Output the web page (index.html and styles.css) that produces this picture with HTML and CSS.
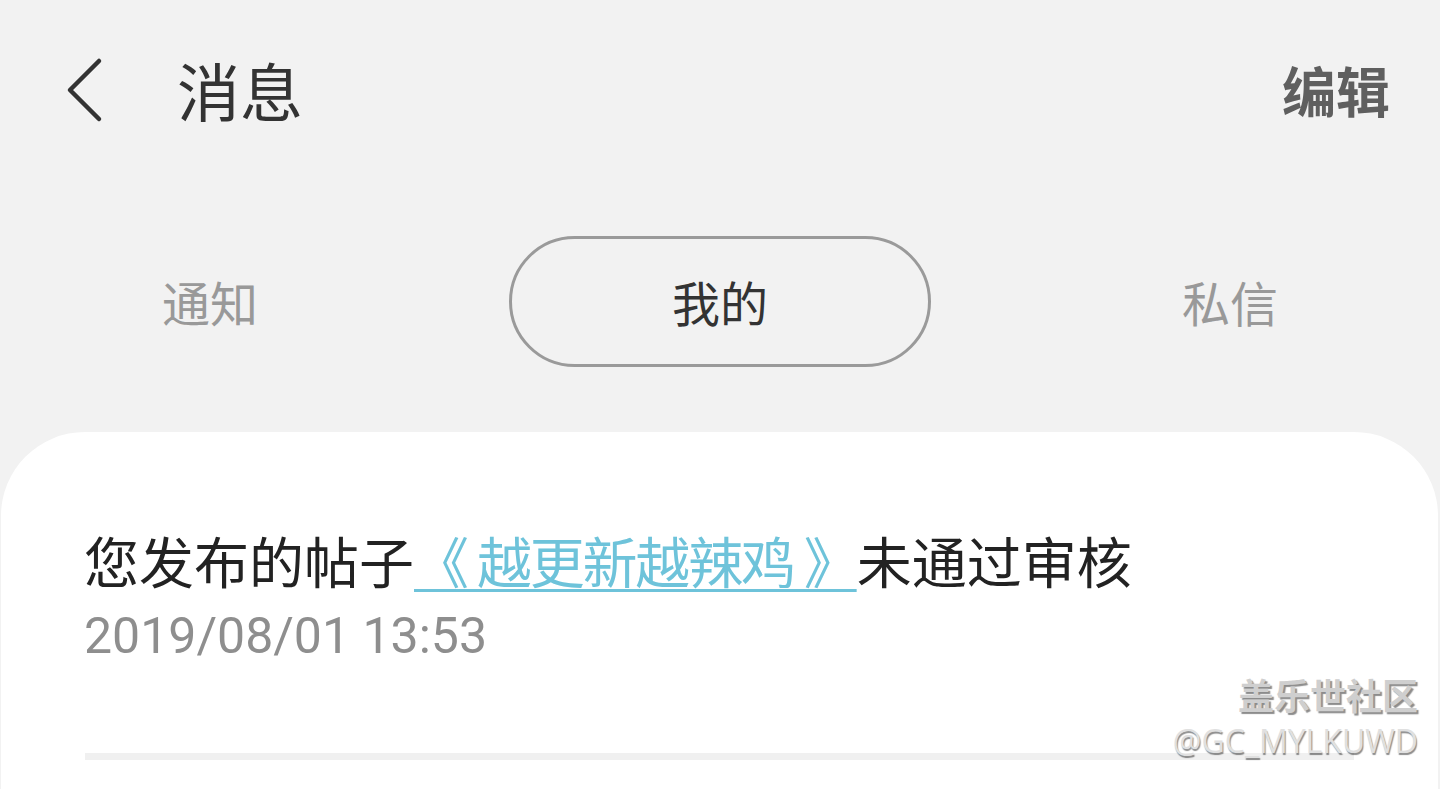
FILE: index.html
```html
<!DOCTYPE html>
<html lang="zh-CN">
<head>
  <meta charset="UTF-8">
  <title>消息</title>
  <link rel="stylesheet" href="styles.css">
</head>
<body>
  <header class="topbar">
    <button class="back" type="button" aria-label="返回">
      <svg width="40" height="66" viewBox="0 0 40 66">
        <path d="M33 4 L4 33 L33 62" fill="none" stroke="#333" stroke-width="4.5" stroke-linecap="round" stroke-linejoin="round"/>
      </svg>
    </button>
    <h1 class="title">消息</h1>
    <a class="edit" href="#">编辑</a>
  </header>

  <!-- 标签切换 -->
  <nav class="tabs">
    <div class="tab">通知</div>
    <div class="tab active">我的</div>
    <div class="tab">私信</div>
  </nav>

  <main class="card">
    <div class="msg">
      <p class="msg-text">您发布的帖子<a href="#">《 越更新越辣鸡 》</a>未通过审核</p>
      <p class="msg-time">2019/08/01 13:53</p>
    </div>
    <div class="divider"></div>
  </main>

  <div class="watermark">
    <div class="wm-name">盖乐世社区</div>
    <div class="wm-id">@GC_MYLKUWD</div>
  </div>
</body>
</html>
```

FILE: styles.css
```css
html, body {
  margin: 0;
  height: 789px;
  overflow: hidden;
}
body {
  font-family: "Noto Sans CJK SC", "Noto Sans", sans-serif;
  background-color: #f2f2f2;
  display: flex;
  flex-direction: column;
  position: relative;
}
.topbar {
  height: 180px;
  display: flex;
  align-items: center;
  padding: 0 50px 0 66px;
  box-sizing: border-box;
}
.back {
  border: none;
  background: none;
  padding: 0;
  width: 40px;
  height: 66px;
  display: flex;
  cursor: pointer;
}
.title {
  margin: -4px 0 0 71px;
  font-size: 63px;
  font-weight: normal;
  color: #333;
  line-height: 1;
  flex: 1;
}
.edit {
  font-size: 54px;
  font-weight: bold;
  color: #5f5f5f;
  text-decoration: none;
  line-height: 1;
}
.tabs {
  display: grid;
  grid-template-columns: repeat(3, 422px);
  column-gap: 88px;
  justify-content: center;
  margin: 56px -1px 0;
  height: 131px;
}
.tab {
  display: flex;
  align-items: center;
  justify-content: center;
  font-size: 48px;
  color: #999;
  border-radius: 66px;
  padding-bottom: 2px;
  box-sizing: border-box;
}
.tab.active {
  color: #333;
  border: 3px solid #9a9a9a;
}
.card {
  flex: 1;
  margin: 65px 2px 0 1px;
  background: white;
  border-radius: 84px 84px 0 0;
  padding: 92px 83px 0;
}
.msg-text {
  margin: 0;
  font-size: 55px;
  line-height: 70px;
  color: #222;
  white-space: nowrap;
}
.msg-text a {
  color: #6ec3da;
  letter-spacing: -2.2px;
  text-decoration: underline;
  text-decoration-thickness: 3px;
  text-underline-offset: 6px;
}
.msg-time {
  margin: 10px 0 0;
  font-family: Roboto, sans-serif;
  font-size: 50px;
  line-height: 64px;
  color: #8e8e8e;
}
.divider {
  height: 7px;
  background: #f0f0f0;
  margin: 85px 1px 0;
}
.watermark {
  position: absolute;
  right: 22px;
  top: 676px;
  text-align: right;
  line-height: 1;
}
.wm-name {
  font-size: 36px;
  font-weight: bold;
  color: #cfcfcf;
  text-shadow: 2px 2px 1px rgba(0,0,0,0.45);
}
.wm-id {
  margin-top: 13px;
  font-family: "Open Sans", sans-serif;
  font-size: 32px;
  color: #e0e0e0;
  text-shadow: 1px 2px 1px rgba(0,0,0,0.45);
}
```
